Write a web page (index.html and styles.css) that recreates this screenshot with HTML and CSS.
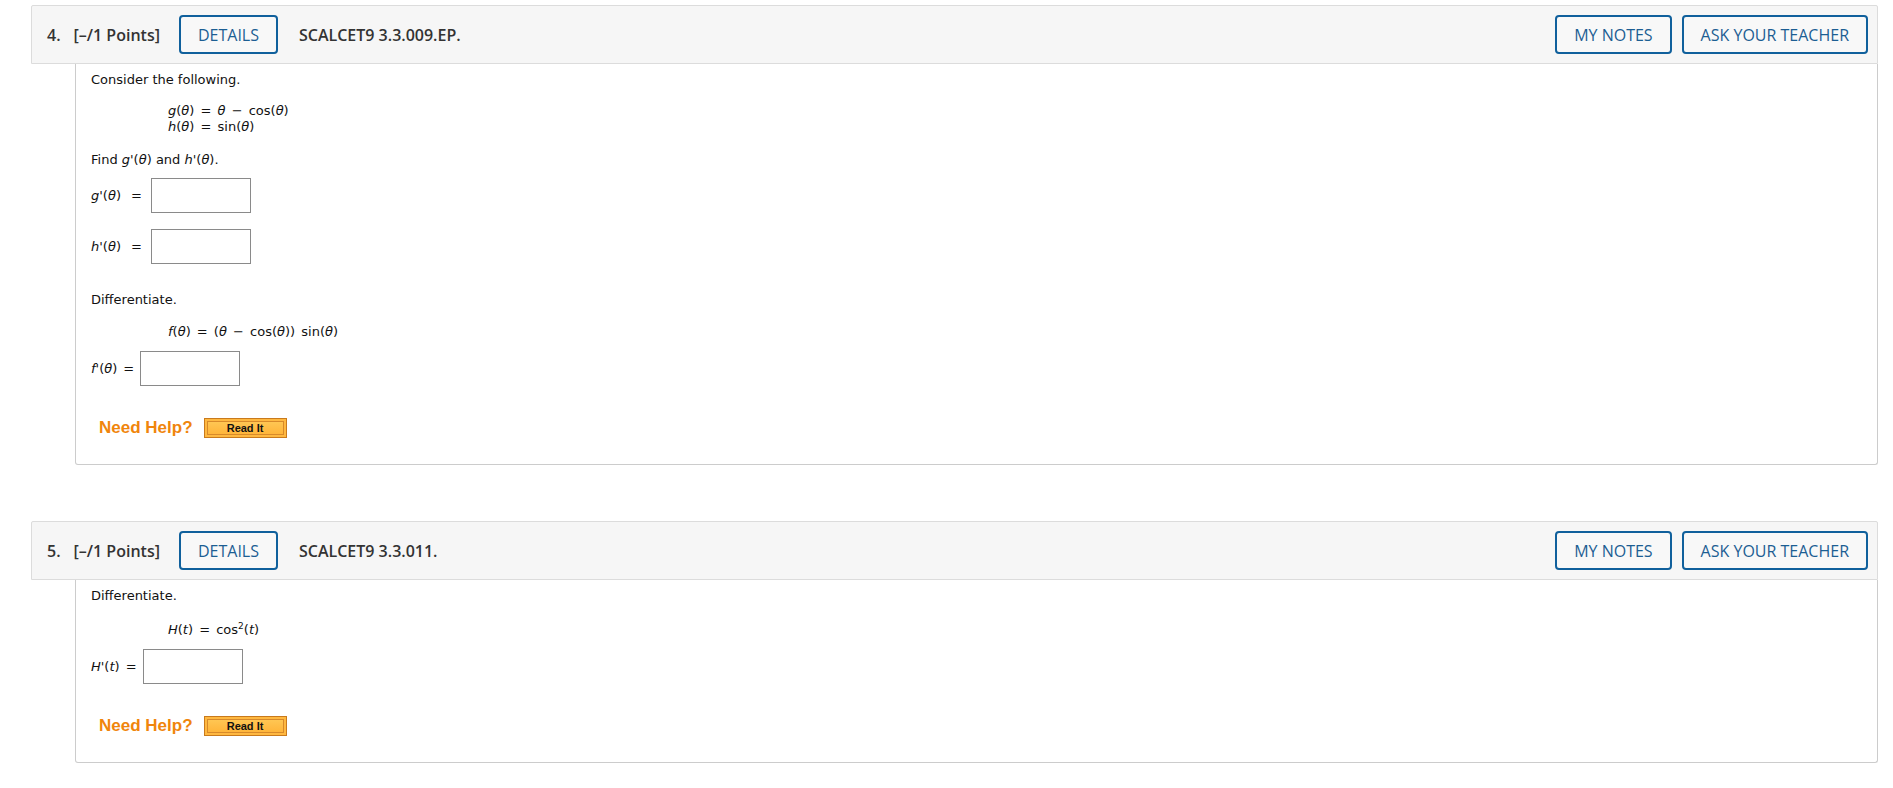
FILE: index.html
```html
<!DOCTYPE html>
<html lang="en">
<head>
<meta charset="utf-8">
<title>Questions</title>
<link rel="stylesheet" href="styles.css">
</head>
<body>
<div class="page">

  <section class="question">
    <header class="q-head">
      <div class="q-left">
        <span class="q-num">4.</span>
        <span class="q-points">[–/1 Points]</span>
        <button class="btn">DETAILS</button>
        <span class="q-code">SCALCET9 3.3.009.EP.</span>
      </div>
      <div class="q-right">
        <button class="btn">MY NOTES</button>
        <button class="btn">ASK YOUR TEACHER</button>
      </div>
    </header>
    <div class="q-body">
      <p class="line">Consider the following.</p>
      <div class="math">
        <div class="mline"><i>g</i>(<i>θ</i>) = <i>θ</i> − cos(<i>θ</i>)</div>
        <div class="mline"><i>h</i>(<i>θ</i>) = sin(<i>θ</i>)</div>
      </div>
      <p class="line find">Find <i>g</i>'(<i>θ</i>) and <i>h</i>'(<i>θ</i>).</p>
      <div class="ans first">
        <span class="lbl"><i>g</i>'(<i>θ</i>)</span><span class="eq wide">=</span><span class="box"></span>
      </div>
      <div class="ans second">
        <span class="lbl"><i>h</i>'(<i>θ</i>)</span><span class="eq wide">=</span><span class="box"></span>
      </div>
      <p class="line diff">Differentiate.</p>
      <div class="math single">
        <div class="mline"><i>f</i>(<i>θ</i>) = (<i>θ</i> − cos(<i>θ</i>)) sin(<i>θ</i>)</div>
      </div>
      <div class="ans first">
        <span class="lbl"><i>f</i>'(<i>θ</i>)</span><span class="eq">=</span><span class="box"></span>
      </div>
      <div class="help">
        <span class="need">Need Help?</span>
        <span class="readit"><span class="readit-in">Read It</span></span>
      </div>
    </div>
  </section>

  <section class="question q2">
    <header class="q-head">
      <div class="q-left">
        <span class="q-num">5.</span>
        <span class="q-points">[–/1 Points]</span>
        <button class="btn">DETAILS</button>
        <span class="q-code">SCALCET9 3.3.011.</span>
      </div>
      <div class="q-right">
        <button class="btn">MY NOTES</button>
        <button class="btn">ASK YOUR TEACHER</button>
      </div>
    </header>
    <div class="q-body">
      <p class="line">Differentiate.</p>
      <div class="math single h">
        <div class="mline"><i>H</i>(<i>t</i>) = cos<sup>2</sup>(<i>t</i>)</div>
      </div>
      <div class="ans first">
        <span class="lbl"><i>H</i>'(<i>t</i>)</span><span class="eq">=</span><span class="box"></span>
      </div>
      <div class="help">
        <span class="need">Need Help?</span>
        <span class="readit"><span class="readit-in">Read It</span></span>
      </div>
    </div>
  </section>

</div>
</body>
</html>
```

FILE: styles.css
```css
html, body {
  margin: 0;
  padding: 0;
  background: #ffffff;
}

.page {
  padding: 5px 15px 0 31px;
}

.question + .question {
  margin-top: 56px;
}

.q-head {
  height: 57px;
  border: 1px solid #dcdcdc;
  background: #f6f6f6;
  border-radius: 2px 2px 0 0;
  display: flex;
  align-items: center;
  justify-content: space-between;
  padding: 0 9px 0 15px;
  font-family: "Open Sans", "Liberation Sans", sans-serif;
  font-size: 16px;
  color: #333333;
}

.q-left, .q-right {
  display: flex;
  align-items: center;
}

.q-right {
  gap: 10px;
}

.q-num {
  font-weight: 600;
  margin-right: 13px;
}

.q-points {
  font-weight: 600;
  margin-right: 19px;
}

.q-code {
  font-weight: 600;
  margin-left: 21px;
}

.btn {
  height: 39px;
  box-sizing: border-box;
  border: 2px solid #10609c;
  border-radius: 4px;
  background: #f8f8f8;
  color: #1c5e93;
  font-family: "Open Sans", "Liberation Sans", sans-serif;
  font-size: 16px;
  font-weight: 500;
  padding: 0 17px;
  margin: 0;
  cursor: pointer;
}

.q-body {
  margin-left: 44px;
  border: 1px solid #cccccc;
  border-top: none;
  border-radius: 0 0 3px 3px;
  padding: 8px 15px 26px 15px;
  font-family: "DejaVu Sans", Verdana, sans-serif;
  font-size: 13px;
  color: #111111;
}

.line {
  margin: 0;
  line-height: 15px;
}

.math {
  margin: 16px 0 0 77px;
  line-height: 16px;
  word-spacing: 2px;
}

.math.single {
  margin-top: 17px;
}

.math.h {
  margin-top: 19px;
}

.mline i, .find i, .lbl i {
  font-style: italic;
}

sup {
  font-size: 9px;
  line-height: 0;
  vertical-align: 5px;
}

.find {
  margin-top: 17px;
}

.diff {
  margin-top: 28px;
}

.ans {
  display: flex;
  align-items: center;
  height: 35px;
}

.ans.first {
  margin-top: 11px;
}

.ans.second {
  margin-top: 16px;
}

.eq {
  margin: 0 6px 0 6px;
}

.eq.wide {
  margin: 0 9px 0 10px;
}

.box {
  display: block;
  width: 98px;
  height: 33px;
  border: 1px solid #8a8a8a;
  background: #ffffff;
}

.help {
  display: flex;
  align-items: center;
  height: 20px;
  margin: 32px 0 0 8px;
}

.need {
  font-family: "Liberation Sans", Arial, sans-serif;
  font-weight: 700;
  font-size: 17px;
  color: #f0850c;
  margin-right: 11px;
}

.readit {
  display: block;
  box-sizing: border-box;
  width: 83px;
  height: 20px;
  border: 1px solid #c97a1c;
  background: #ffb840;
  padding: 2px;
}

.readit-in {
  display: flex;
  align-items: center;
  justify-content: center;
  box-sizing: border-box;
  height: 14px;
  border: 1px solid #d88a2a;
  background: linear-gradient(#ffc653, #ffb53a);
  font-family: "Liberation Sans", Arial, sans-serif;
  font-weight: 700;
  font-size: 11px;
  color: #111111;
}
```
